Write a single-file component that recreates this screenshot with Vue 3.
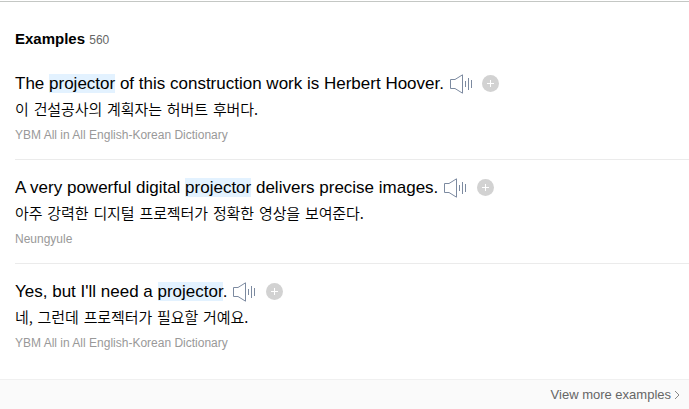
<script setup>
const examples = [
  { before: 'The ', after: ' of this construction work is Herbert Hoover.', korean: '이 건설공사의 계획자는 허버트 후버다.', source: 'YBM All in All English-Korean Dictionary' },
  { before: 'A very powerful digital ', after: ' delivers precise images.', korean: '아주 강력한 디지털 프로젝터가 정확한 영상을 보여준다.', source: 'Neungyule' },
  { before: "Yes, but I'll need a ", after: '.', korean: '네, 그런데 프로젝터가 필요할 거예요.', source: 'YBM All in All English-Korean Dictionary' },
]
</script>

<template>
  <section class="panel">
    <h2 class="heading">Examples <span class="count">560</span></h2>
    <ul class="list">
      <li v-for="item in examples" :key="item.korean" class="item">
        <div class="sentence">
          <p class="english">{{ item.before }}<mark>projector</mark>{{ item.after }}</p>
          <button class="listen" aria-label="Listen">
            <svg width="24" height="20" viewBox="0 0 24 20" fill="none" stroke="#7c8aa0">
              <path d="M.5 5.5H5L12.5.8V19.2L5 14.5H.5Z" />
              <path d="M15.5 7V13M18.5 4V16M21.5 6V14" />
            </svg>
          </button>
          <button class="add" aria-label="Add">
            <svg width="17" height="17" viewBox="0 0 17 17">
              <circle cx="8.5" cy="8.5" r="8.5" fill="#d2d2d2" />
              <path d="M5 8.5H12M8.5 5V12" stroke="#fff" />
            </svg>
          </button>
        </div>
        <p class="korean">{{ item.korean }}</p>
        <p class="source">{{ item.source }}</p>
      </li>
    </ul>
    <footer class="more">
      <a>View more examples</a>
      <svg width="6" height="10" viewBox="0 0 6 10" fill="none" stroke="#888"><path d="M1 1L5 5L1 9" /></svg>
    </footer>
  </section>
</template>

<style>
body { background: #fff; overflow: hidden; }
</style>

<style scoped>
.panel { box-sizing: border-box; height: 409px; display: flex; flex-direction: column; padding-top: 1px; font-family: "Liberation Sans", "Noto Sans CJK KR", sans-serif; color: #000; }
.panel::before { content: ""; height: 1px; background: #c4c7c4; }
.heading { margin: 27px 0 0 15px; font-size: 15px; line-height: 20px; height: 20px; font-weight: 700; }
.count { font-size: 12px; font-weight: 400; color: #666; }
.list { list-style: none; margin: 6px 0 0 15px; padding: 0; flex: 1; }
.item { box-sizing: border-box; height: 104px; padding-top: 17px; border-top: 1px solid #ebebeb; }
.item:first-child { border-top-color: transparent; }
.sentence { display: flex; align-items: center; height: 22px; }
p { margin: 0; white-space: pre; }
.english { font-size: 17px; line-height: 20px; }
mark { background: #e3f2ff; color: inherit; }
button { padding: 0; border: 0; background: none; display: flex; }
.listen { margin-left: 6px; }
.add { margin: 0 0 1px 8.5px; }
.korean { font-family: "Noto Sans CJK KR", sans-serif; font-size: 15px; font-weight: 350; line-height: 22px; margin-top: 3px; letter-spacing: -.1px; word-spacing: 1.7px; }
.source { font-size: 12px; line-height: 18px; margin-top: 6px; color: #999; }
.more { box-sizing: border-box; height: 30px; display: flex; justify-content: flex-end; align-items: center; gap: 3px; padding-right: 9px; background: #fafafa; border-top: 1px solid #f0f0f0; font-size: 13px; color: #666; }
</style>
